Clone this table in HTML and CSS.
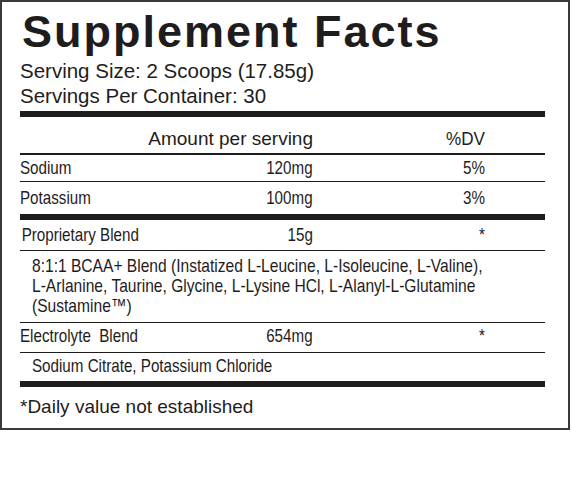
FILE: index.html
```html
<!DOCTYPE html>
<html>
<head>
<meta charset="utf-8">
<link rel="stylesheet" href="styles.css">
</head>
<body>
<div class="label">
  <h1 class="title">Supplement Facts</h1>
  <p class="serving">Serving Size: 2 Scoops (17.85g)</p>
  <p class="serving">Servings Per Container: 30</p>
  <div class="rule thick rule-top"></div>
  <div class="row head"><span class="name"></span><span class="amt">Amount per serving</span><span class="dv">%DV</span></div>
  <div class="rule mid"></div>
  <div class="row r-sodium"><span class="name">Sodium</span><span class="amt">120mg</span><span class="dv">5%</span></div>
  <div class="rule thin"></div>
  <div class="row r-potassium"><span class="name">Potassium</span><span class="amt">100mg</span><span class="dv">3%</span></div>
  <div class="rule thick"></div>
  <div class="row r-blend"><span class="name indent-small">Proprietary Blend</span><span class="amt">15g</span><span class="dv">*</span></div>
  <div class="rule thin"></div>
  <div class="ingredients"><p class="cond-text">8:1:1 BCAA+ Blend (Instatized L-Leucine, L-Isoleucine, L-Valine), L-Arlanine, Taurine, Glycine, L-Lysine HCl, L-Alanyl-L-Glutamine (Sustamine™)</p></div>
  <div class="rule thin"></div>
  <div class="row r-electro"><span class="name">Electrolyte&nbsp; Blend</span><span class="amt">654mg</span><span class="dv">*</span></div>
  <div class="rule thin"></div>
  <div class="ingredients single"><p class="cond-text">Sodium Citrate, Potassium Chloride</p></div>
  <div class="rule thick"></div>
  <p class="footnote">*Daily value not established</p>
</div>
</body>
</html>
```

FILE: styles.css
```css
html, body {
  margin: 0;
  padding: 0;
  background: #ffffff;
}

body {
  color: #1f1c1d;
  font-family: "Liberation Sans", Arial, sans-serif;
}

.label {
  box-sizing: border-box;
  width: 570px;
  height: 430px;
  border: 2px solid #3a3a3a;
  padding: 4px 23px 0 18px;
  overflow: hidden;
}

.title {
  margin: 0;
  font-size: 45px;
  line-height: 52px;
  font-weight: 700;
  letter-spacing: 2px;
  padding-left: 2px;
}

.serving {
  margin: 0;
  font-size: 20.5px;
  line-height: 25px;
}

.rule {
  background: #1f1c1d;
}

.rule.thick {
  height: 6px;
}

.rule.rule-top {
  margin-top: 3px;
}

.rule.mid {
  height: 2px;
}

.rule.thin {
  height: 1px;
}

.row {
  display: grid;
  grid-template-columns: 1fr auto 172px;
  padding-right: 60px;
  font-size: 18.5px;
}

.row .amt,
.row .dv {
  text-align: right;
  white-space: nowrap;
}

/* condensed face: the label uses a narrow grotesque */
.row .name {
  transform: scaleX(0.82);
  transform-origin: left center;
  white-space: nowrap;
}

.row .amt,
.row .dv {
  transform: scaleX(0.82);
  transform-origin: right center;
}

.row.head {
  font-size: 19px;
  line-height: 29px;
  padding-top: 7px;
}

.row.head .amt {
  transform: none;
}

.row.head .dv {
  transform: scaleX(0.9);
}

.r-sodium {
  line-height: 26px;
}

.r-potassium {
  line-height: 32px;
}

.r-blend {
  line-height: 30px;
}

.indent-small {
  padding-left: 2px;
}

.r-electro {
  line-height: 26px;
  padding-bottom: 3px;
}

.ingredients {
  padding: 5px 0 6px 12px;
  overflow: hidden;
}

.cond-text {
  margin: 0;
  width: 555px;
  font-size: 19px;
  line-height: 20px;
  transform: scaleX(0.82);
  transform-origin: left top;
}

.ingredients.single {
  padding: 0 0 2px 12px;
}

.ingredients.single .cond-text {
  font-size: 18.5px;
  line-height: 26px;
}

.footnote {
  margin: 0;
  font-size: 19px;
  line-height: 40px;
}
```
